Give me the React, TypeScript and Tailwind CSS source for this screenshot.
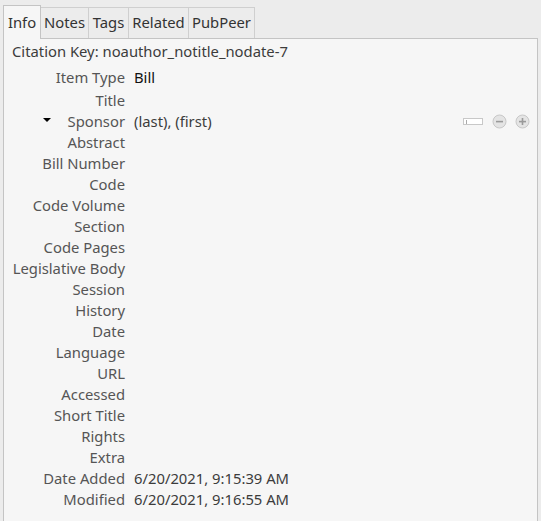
import React from "react";

const rows: [string, string][] = [
  ["Title", ""],
  ["Sponsor", "(last), (first)"],
  ["Abstract", ""],
  ["Bill Number", ""],
  ["Code", ""],
  ["Code Volume", ""],
  ["Section", ""],
  ["Code Pages", ""],
  ["Legislative Body", ""],
  ["Session", ""],
  ["History", ""],
  ["Date", ""],
  ["Language", ""],
  ["URL", ""],
  ["Accessed", ""],
  ["Short Title", ""],
  ["Rights", ""],
  ["Extra", ""],
  ["Date Added", "6/20/2021, 9:15:39 AM"],
  ["Modified", "6/20/2021, 9:16:55 AM"],
];

const tabs: [string, string][] = [
  ["Notes", "w-[48px]"],
  ["Tags", "w-[40px]"],
  ["Related", "w-[60px]"],
  ["PubPeer", "w-[66px]"],
];

function CircleBtn({ plus }: { plus?: boolean }) {
  return (
    <svg width="15" height="15" viewBox="0 0 15 15">
      <circle cx="7.5" cy="7.5" r="6.5" fill="#e4e4e4" stroke="#c8c8c8" />
      <rect x="4" y="6.8" width="7" height="1.6" fill="#9a9a9a" />
      {plus && <rect x="6.7" y="4" width="1.6" height="7" fill="#9a9a9a" />}
    </svg>
  );
}

export default function App() {
  return (
    <div
      className="w-[541px] h-[521px] overflow-hidden bg-[#ececec] text-[14.8px]"
      style={{ fontFamily: '"Noto Sans", sans-serif' }}
    >
      <div className="flex items-end h-[38px] pl-[3px]">
        <div className="relative z-10 w-[38px] h-[34px] pt-[5px] text-center bg-[#f6f6f6] border border-b-0 border-[#c4c4c4] text-[#333] -mb-px">
          Info
        </div>
        {tabs.map(([t, w]) => (
          <div
            key={t}
            className={`${w} h-[31px] pt-[3px] text-center border border-l-0 border-b-0 border-[#cfcfcf] text-[#333]`}
          >
            {t}
          </div>
        ))}
      </div>
      <div className="ml-[3px] w-[535px] h-[500px] bg-[#f6f6f6] border border-[#c4c4c4]">
        <div className="pl-[8px] pt-[1px] h-[23px] text-[#3c3c3c]">
          Citation Key: noauthor_notitle_nodate-7
        </div>
        <div className="flex items-center h-[21px] mt-[5px]">
          <div className="w-[121px] text-right text-[#555] shrink-0">Item Type</div>
          <div className="pl-[9px] text-[#111]">Bill</div>
        </div>
        <div className="mt-[2px]">
          {rows.map(([label, value]) => (
            <div key={label} className="flex items-center h-[21px]">
              <div className="relative w-[121px] text-right text-[#555] shrink-0">
                {label === "Sponsor" && (
                  <span className="absolute left-[39px] top-[8px] w-0 h-0 border-l-[4px] border-r-[4px] border-t-[4px] border-l-transparent border-r-transparent border-t-black" />
                )}
                {label}
              </div>
              <div className="pl-[9px] text-[#3c3c3c] flex-1">{value}</div>
              {label === "Sponsor" && (
                <div className="flex items-center gap-[8px] pr-[7px]">
                  <div className="w-[20px] h-[7px] bg-white border border-[#c8c8c8] mr-[1px] flex items-center pl-[2px]">
                    <div className="w-px h-[4px] bg-[#aaa]" />
                  </div>
                  <CircleBtn />
                  <CircleBtn plus />
                </div>
              )}
            </div>
          ))}
        </div>
      </div>
    </div>
  );
}
